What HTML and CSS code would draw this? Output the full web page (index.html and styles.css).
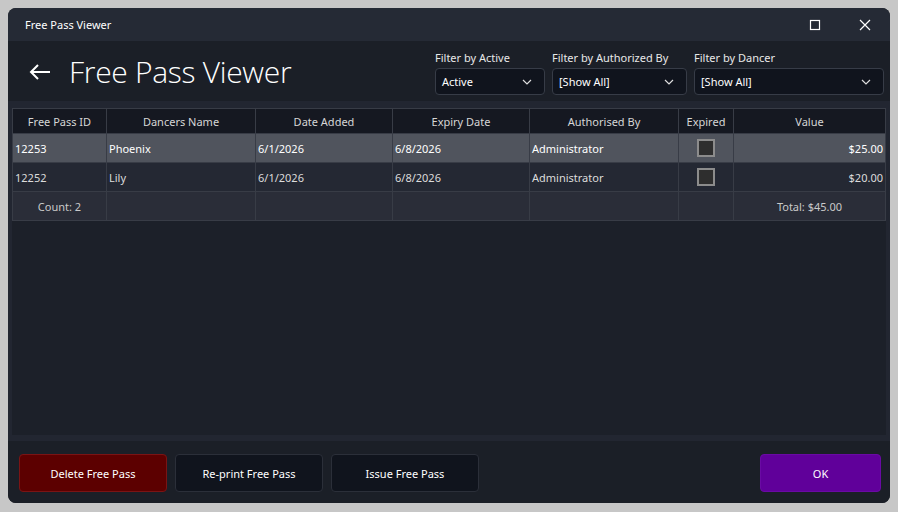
FILE: index.html
```html
<!DOCTYPE html>
<html>
<head>
<meta charset="utf-8">
<link rel="stylesheet" href="styles.css">
</head>
<body>
<div class="window">
  <div class="titlebar">
    <span class="wintitle">Free Pass Viewer</span>
    <div class="winctrls">
      <svg class="ctl" width="12" height="12" viewBox="0 0 12 12"><rect x="1.5" y="1.5" width="9" height="9" fill="none" stroke="#fff" stroke-width="1.2"/></svg>
      <svg class="ctl close" width="12" height="12" viewBox="0 0 12 12"><path d="M1 1 L11 11 M11 1 L1 11" stroke="#fff" stroke-width="1.2"/></svg>
    </div>
  </div>
  <div class="header">
    <div class="heading">
      <svg class="back" width="22" height="16" viewBox="0 0 22 16"><path d="M21 8 H2 M9 1 L2 8 L9 15" fill="none" stroke="#fff" stroke-width="2"/></svg>
      <h1 class="title">Free Pass Viewer</h1>
    </div>
    <div class="filters">
      <div class="filter f-active">
        <label class="flabel">Filter by Active</label>
        <div class="select"><span>Active</span><svg width="10" height="6" viewBox="0 0 10 6"><path d="M1 1 L5 5 L9 1" fill="none" stroke="#ddd" stroke-width="1.2"/></svg></div>
      </div>
      <div class="filter f-auth">
        <label class="flabel">Filter by Authorized By</label>
        <div class="select"><span>[Show All]</span><svg width="10" height="6" viewBox="0 0 10 6"><path d="M1 1 L5 5 L9 1" fill="none" stroke="#ddd" stroke-width="1.2"/></svg></div>
      </div>
      <div class="filter f-dancer">
        <label class="flabel">Filter by Dancer</label>
        <div class="select"><span>[Show All]</span><svg width="10" height="6" viewBox="0 0 10 6"><path d="M1 1 L5 5 L9 1" fill="none" stroke="#ddd" stroke-width="1.2"/></svg></div>
      </div>
    </div>
  </div>
  <div class="content">
    <div class="grid">
      <table class="passes">
        <colgroup>
          <col class="c1"><col class="c2"><col class="c3"><col class="c4"><col class="c5"><col class="c6"><col class="c7">
        </colgroup>
        <thead>
          <tr><th>Free Pass ID</th><th>Dancers Name</th><th>Date Added</th><th>Expiry Date</th><th>Authorised By</th><th>Expired</th><th>Value</th></tr>
        </thead>
        <tbody>
          <tr class="sel"><td>12253</td><td>Phoenix</td><td>6/1/2026</td><td>6/8/2026</td><td>Administrator</td><td class="chk"><span class="box"></span></td><td class="num">$25.00</td></tr>
          <tr><td>12252</td><td>Lily</td><td>6/1/2026</td><td>6/8/2026</td><td>Administrator</td><td class="chk"><span class="box"></span></td><td class="num">$20.00</td></tr>
          <tr class="sum"><td class="ctr">Count: 2</td><td></td><td></td><td></td><td></td><td></td><td class="ctr">Total: $45.00</td></tr>
        </tbody>
      </table>
    </div>
  </div>
  <div class="footer">
    <div class="actions">
      <button class="btn danger">Delete Free Pass</button>
      <button class="btn">Re-print Free Pass</button>
      <button class="btn">Issue Free Pass</button>
    </div>
    <button class="btn ok">OK</button>
  </div>
</div>
</body>
</html>
```

FILE: styles.css
```css
html, body {
  margin: 0;
  padding: 0;
}
body {
  background: #c7c7c7;
  width: 898px;
  height: 512px;
  padding: 8px 0 0 8px;
  box-sizing: border-box;
  font-family: "Noto Sans", "Open Sans", sans-serif;
  color: #fff;
}
.window {
  width: 882px;
  height: 495px;
  background: #1b1f27;
  border-radius: 8px;
  overflow: hidden;
  display: flex;
  flex-direction: column;
}
.titlebar {
  height: 33px;
  flex: none;
  background: #252a35;
  display: flex;
  align-items: center;
  justify-content: space-between;
  padding-left: 17px;
}
.wintitle {
  font-size: 11px;
  color: #fff;
}
.winctrls {
  display: flex;
  align-items: center;
  gap: 38px;
  margin-right: 19px;
  margin-top: 1px;
}
.header {
  height: 60px;
  flex: none;
  display: flex;
  justify-content: space-between;
  background: #1b1f27;
}
.heading {
  display: flex;
  align-items: center;
  padding-left: 21px;
  padding-top: 1px;
}
.back {
  margin-right: 18px;
}
.title {
  margin: 0;
  font-family: "Open Sans", sans-serif;
  font-weight: 300;
  font-size: 30px;
  letter-spacing: -0.3px;
  color: #fff;
}
.filters {
  display: flex;
  gap: 7px;
  padding-top: 10px;
  margin-right: 6px;
}
.filter {
  display: flex;
  flex-direction: column;
}
.flabel {
  font-size: 11px;
  color: #e8e8e8;
  height: 17px;
  line-height: 14px;
}
.f-active { width: 110px; }
.f-auth { width: 135px; }
.f-dancer { width: 190px; }
.select {
  height: 27px;
  box-sizing: border-box;
  background: #10141d;
  border: 1px solid #373c47;
  border-radius: 4px;
  display: flex;
  align-items: center;
  justify-content: space-between;
  padding: 0 12px 0 6px;
  font-size: 11px;
  color: #fff;
}
.content {
  flex: 1;
  background: #222631;
  padding: 7px 5px 6px 4px;
  display: flex;
}
.grid {
  flex: 1;
  background: #1c2029;
}
.passes {
  border-collapse: collapse;
  width: 874px;
  table-layout: fixed;
  font-size: 11px;
}
.c1 { width: 94px; }
.c2 { width: 149px; }
.c3 { width: 137px; }
.c4 { width: 137px; }
.c5 { width: 149px; }
.c6 { width: 55px; }
.c7 { width: 152px; }
.passes th, .passes td {
  border: 1px solid #383c46;
  padding: 0 2px;
  white-space: nowrap;
  overflow: hidden;
}
.passes th {
  height: 24px;
  background: #151821;
  font-weight: normal;
  color: #d6d6d6;
  text-align: center;
}
.passes td {
  height: 28px;
  color: #dcdcdc;
  background: #242833;
}
.passes tr.sel td {
  background: #50545d;
  color: #fff;
}
.passes tr.sum td {
  background: #2a2d38;
  color: #c9c9c9;
}
.passes td.ctr { text-align: center; }
.passes td.num { text-align: right; }
.passes td.chk { text-align: center; }
.box {
  display: inline-block;
  width: 14px;
  height: 14px;
  border: 2px solid #8c8c8c;
  background: #2e2e2e;
  vertical-align: middle;
}
.footer {
  height: 62px;
  flex: none;
  background: #1b1f27;
  display: flex;
  justify-content: space-between;
  align-items: flex-start;
  padding: 13px 9px 0 11px;
  box-sizing: border-box;
}
.actions {
  display: flex;
  gap: 8px;
}
.btn {
  height: 38px;
  width: 148px;
  border-radius: 4px;
  border: 1px solid #2b2f39;
  background: #10141d;
  color: #fff;
  font-family: "Noto Sans", "Open Sans", sans-serif;
  font-size: 11px;
  cursor: pointer;
}
.btn.danger {
  background: #5c0000;
  border-color: #7a1414;
}
.btn.ok {
  width: 121px;
  background: #60009a;
  border-color: #6a0aa4;
}
```
